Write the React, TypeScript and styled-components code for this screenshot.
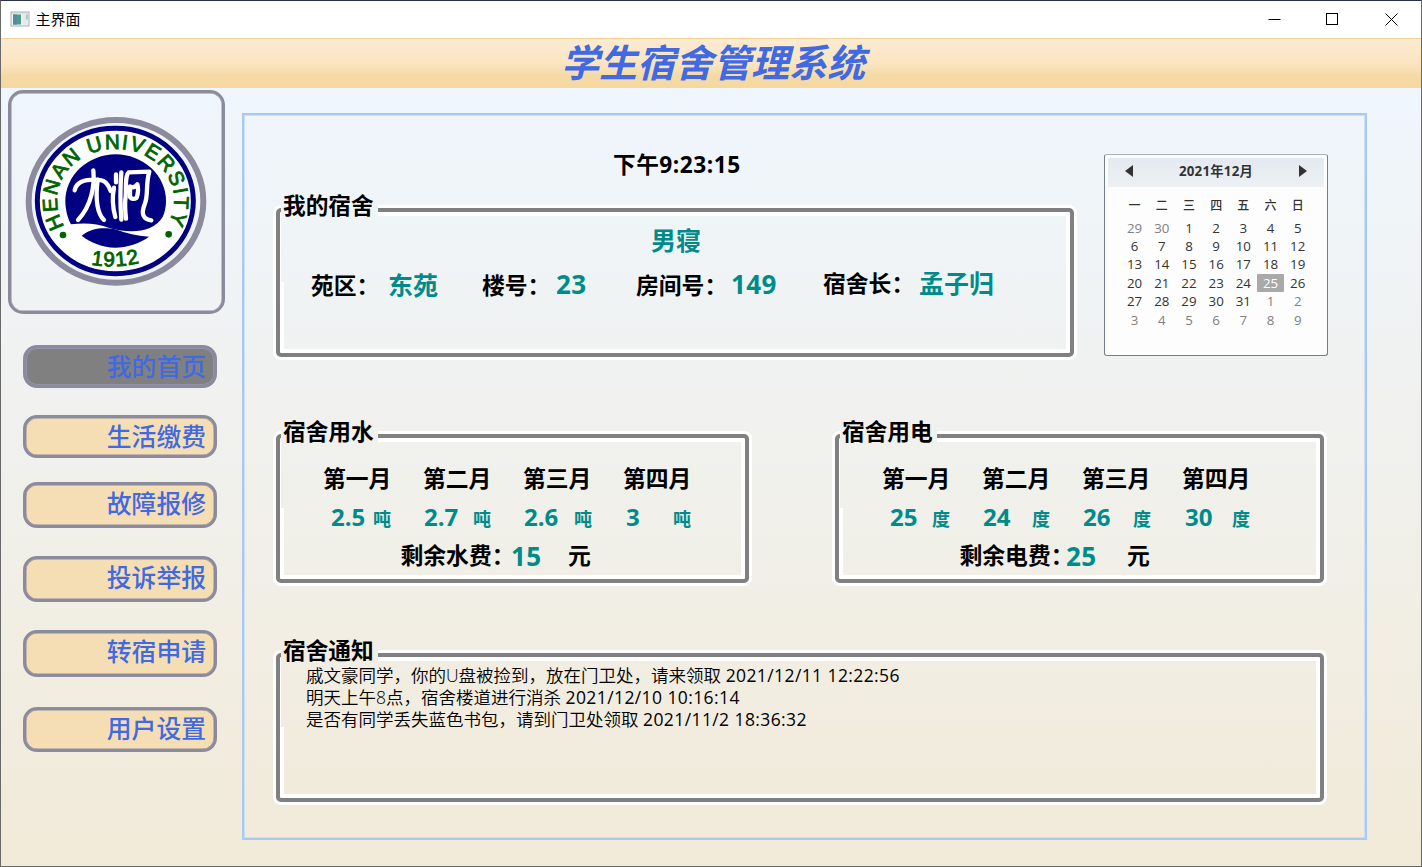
import React from "react";
import styled, { createGlobalStyle } from "styled-components";

const GlobalStyle = createGlobalStyle`
  *, *::before, *::after { box-sizing: border-box; }
  body {
    margin: 0;
    overflow: hidden;
    font-family: "Open Sans", "Noto Sans CJK SC", sans-serif;
    color: #000;
  }
`;

const Window = styled.div`
  width: 1422px;
  height: 867px;
  display: flex;
  flex-direction: column;
  border: 1px solid #696969;
  border-top-color: #2b3046;
  background: #fff;
`;

const TitleBar = styled.header`
  height: 37px;
  display: flex;
  align-items: center;
  padding: 0 0.5px 1px 8.5px;
  font-size: 15px;
  flex: none;
`;

const WindowName = styled.span`
  flex: 1;
  margin: -1px 0 0 6px;
  line-height: 20px;
`;

const Caption = styled.button`
  width: 58.5px;
  height: 35px;
  padding: 0;
  border: 0;
  background: none;
  display: grid;
  place-items: center;
`;

const Banner = styled.div`
  height: 50px;
  flex: none;
  border-top: 1px solid #f3d193;
  background: linear-gradient(#faebd3 0%, #fbe5c0 50%, #f5daa6 75%, #f5d89f 100%);
  text-align: center;
  padding-left: 4px;
`;

const BannerTitle = styled.h1`
  margin: 0;
  font-size: 38px;
  line-height: 47px;
  font-weight: 700;
  font-style: italic;
  color: #4169e1;
`;

const Body = styled.div`
  flex: 1;
  display: flex;
  background: linear-gradient(#eff6fd, #f0f2f1 36%, #f2ead8);
`;

const Sidebar = styled.nav`
  width: 241px;
  padding: 2px 0 0 7px;
  flex: none;
`;

const LogoCard = styled.div`
  width: 217px;
  height: 224px;
  border: 3.5px solid #8c8b9e;
  border-radius: 15px;
  padding: 23px 0 0 14px;
  margin-bottom: 31px;
  box-shadow: inset 0 0 0 0.5px #8c8b9e;
`;

const NavButton = styled.button<{ $h: number; $gap: number; $active?: boolean }>`
  display: flex;
  justify-content: flex-end;
  align-items: flex-start;
  width: 194px;
  height: ${(p) => p.$h}px;
  margin: 0 0 ${(p) => p.$gap}px 15px;
  padding: 2px 8px 0 0;
  border: 3px solid #8c8b9e;
  border-radius: 14px;
  background: ${(p) => (p.$active ? "#808080" : "#f5deb3")};
  box-shadow: ${(p) => (p.$active ? "inset 0 0 0 1px #9292a8" : "inset 0 0 0 0.5px #8c8b9e")};
  color: #4169e1;
  font: 500 24.8px/30px "Noto Sans CJK SC", sans-serif;
`;

const Panel = styled.main`
  width: 1125px;
  height: 727px;
  margin-top: 25px;
  padding-left: 32px;
  border: 2px solid #a8c9f1;
  box-shadow: inset 0 0 0 1px #cbdff5;
`;

const Row = styled.div<{ $gap?: number }>`
  display: flex;
  gap: ${(p) => p.$gap ?? 0}px;
`;

const Clock = styled.div`
  height: 93px;
  padding: 35px 0 0 337px;
  font-size: 22.7px;
  line-height: 30px;
  font-weight: 700;
  letter-spacing: 0.5px;
`;

const GroupBox = styled.section<{ $w: number; $mt?: number }>`
  position: relative;
  width: ${(p) => p.$w}px;
  height: 149px;
  margin-top: ${(p) => p.$mt ?? 0}px;
`;

/* Etched border, opened behind the legend. */
const Frame = styled.div`
  position: absolute;
  inset: 0;
  border: 4px solid #808080;
  border-radius: 5px;
  box-shadow: 0 0 0 3px #fff, inset 0 0 0 4px #fff;
  clip-path: polygon(
    -4px -4px, 5px -4px, 5px 74px, 10px 74px, 10px 130px, calc(100% - 12px) 130px,
    calc(100% - 12px) 12px, 102px 12px, 102px -4px, calc(100% + 4px) -4px,
    calc(100% + 4px) calc(100% + 4px), -4px calc(100% + 4px)
  );
`;

const Legend = styled.h2`
  position: relative;
  margin: 0;
  top: -17px;
  padding-left: 7px;
  height: 30px;
  font-size: 22.7px;
  line-height: 30px;
  font-weight: 700;
`;

const Label = styled.span<{ $raise?: number }>`
  font-size: 22.8px;
  line-height: 30px;
  font-weight: 700;
  white-space: nowrap;
  margin-top: ${(p) => -(p.$raise ?? 0)}px;
`;

const FeeLabel = styled(Label)`
  font-feature-settings: "halt";
`;

const Value = styled(Label)<{ $size?: number }>`
  color: #008b8b;
  font-size: ${(p) => p.$size ?? 25}px;
`;

const Figure = styled(Value)`
  letter-spacing: 0.35px;
`;

const DormType = styled.div`
  margin-top: -14px;
  padding-left: 375px;
  display: flex;
`;

const InfoGrid = styled.div`
  display: grid;
  grid-template-columns: 77px 94px 74px 80px 95px 92px 96px auto;
  padding-left: 35px;
  margin-top: 16px;
`;

const MonthGrid = styled.div`
  display: grid;
  grid-template-columns: repeat(4, 100px);
  padding-left: 47px;
`;

const ReadingGrid = styled.div`
  display: grid;
  grid-template-columns: 42px 51px 49px 51px 50px 52px 47px auto;
  padding-left: 55px;
  margin-top: 8px;
`;

const Balance = styled.div<{ $valueAt: number }>`
  display: grid;
  grid-template-columns: ${(p) => p.$valueAt}px ${(p) => 167.5 - p.$valueAt}px auto;
  padding-left: 124.5px;
  margin-top: 7px;
`;

const Notices = styled.ul`
  list-style: none;
  margin: -19px 0 0;
  padding: 0 0 0 30px;
  font-size: 17.5px;
  line-height: 22px;
  font-weight: 350;
`;

const Stamp = styled.time`
  font-weight: 400;
  letter-spacing: 0.4px;
`;

const CalendarBox = styled.aside`
  width: 224px;
  height: 202px;
  margin-top: 39px;
  padding: 3px;
  border: 1px solid #737f8c;
  border-top-color: #a9b2bd;
  border-radius: 3px;
  background: #fdfdfe;
  color: #333;
`;

const CalendarHead = styled.div`
  height: 29px;
  display: flex;
  align-items: center;
  justify-content: space-between;
  padding: 0 17px 3px 17px;
  background: linear-gradient(#e4e9f1, #edf1f4);
  font-size: 13.3px;
  line-height: 16px;
  font-weight: 700;
`;

const CalendarTitle = styled.span`
  letter-spacing: 0.25px;
`;

const Week = styled.div<{ $head?: boolean }>`
  display: grid;
  grid-template-columns: repeat(7, 27.2px);
  padding-left: 13px;
  height: ${(p) => (p.$head ? "31.5px" : "18.45px")};
  padding-top: ${(p) => (p.$head ? "9.6px" : "0")};
`;

const Day = styled.span<{ $muted?: boolean; $selected?: boolean }>`
  height: 18.45px;
  line-height: 18px;
  font-size: 13.3px;
  text-align: center;
  border-radius: 1px;
  color: ${(p) => (p.$selected ? "#fff" : p.$muted ? "#808080" : "#333")};
  background: ${(p) => (p.$selected ? "#a9a9a9" : "transparent")};
`;

const WeekName = styled(Day)`
  font-size: 12px;
  font-weight: 500;
`;

const UsageColumn = styled.div`
  padding-top: 77px;
`;

const AppIcon = () => (
  <svg width="20" height="16" viewBox="0 0 20 16">
    <rect x="1" y="1" width="18" height="14" fill="#f1f3f4" stroke="#a9afb5" />
    <path d="M1.5 2h17" stroke="#c5cbd0" />
    <rect x="3" y="3.5" width="8" height="10" fill="#4e9b8a" />
    <path d="M3 3.5h4v10H3z" fill="#4f8f9d" />
    <rect x="12.5" y="3.5" width="5" height="10" fill="#e6e9eb" />
    <path d="M17 3.5v5" stroke="#76a58a" />
  </svg>
);

const UniversitySeal = () => (
  <svg width="182" height="171" viewBox="75 93 546 513">
    <defs>
      <path id="ring" d="M194 424 A172 155 0 0 1 347 192 A172 155 0 0 1 500 424" />
      <path id="year" d="M242 532 Q347 560 452 524" />
    </defs>
    <ellipse cx="348" cy="349" rx="262" ry="244" fill="none" stroke="#8c8b9e" strokeWidth="18" />
    <ellipse cx="346" cy="348" rx="234" ry="218" fill="#fff" stroke="#000080" strokeWidth="15" />
    <path
      d="M213 418 C203 400 196 372 196 348 A151 140 0 0 1 498 348 C498 365 495 382 488 396 C460 442 395 447 330 430 C290 414 250 414 213 418Z"
      fill="#000080"
    />
    <path
      d="M245 452 C280 425 320 428 350 434 C380 445 410 452 447 455 C420 475 380 488 345 488 C310 488 270 472 245 452Z"
      fill="#000080"
    />
    <g fill="none" stroke="#fff" strokeWidth="13" strokeLinecap="round" strokeLinejoin="round">
      <path d="M224 316 C230 290 252 284 286 284 C312 284 322 292 332 318" />
      <path d="M280 256 C284 300 276 360 234 405" />
      <path d="M293 284 C286 340 292 385 312 405" />
      <path d="M348 268v24M342 308c-5 25-4 60 4 88M364 262c-3 40-4 90 0 142M382 268c-8 20-2 50-6 75c-2 20 0 40 2 58" />
      <path d="M386 262 L448 260 C436 300 446 330 434 358 C422 388 430 402 454 406" />
      <path d="M390 304q12 8 22-6c4 14 2 28-2 40c-8 6-16 4-20-2z" />
    </g>
    <g
      fill="#006400"
      fontFamily="Liberation Sans, sans-serif"
      fontSize="62"
      stroke="#006400"
      strokeWidth="2.6"
    >
      <text letterSpacing="4.4">
        <textPath href="#ring">HENAN UNIVERSITY</textPath>
      </text>
      <text letterSpacing="3">
        <textPath href="#year" startOffset="50%" textAnchor="middle">1912</textPath>
      </text>
    </g>
    <circle cx="189" cy="450" r="10" fill="#006400" />
    <circle cx="506" cy="448" r="10" fill="#006400" />
  </svg>
);

const navItems = [
  { text: "我的首页", h: 43, gap: 27, active: true },
  { text: "生活缴费", h: 43, gap: 24 },
  { text: "故障报修", h: 46, gap: 28 },
  { text: "投诉举报", h: 46, gap: 28 },
  { text: "转宿申请", h: 47, gap: 30 },
  { text: "用户设置", h: 45, gap: 0 },
];

const months = ["第一月", "第二月", "第三月", "第四月"];

const notices = [
  { text: "戚文豪同学，你的U盘被捡到，放在门卫处，请来领取", time: "2021/12/11 12:22:56" },
  { text: "明天上午8点，宿舍楼道进行消杀", time: "2021/12/10 10:16:14" },
  { text: "是否有同学丢失蓝色书包，请到门卫处领取", time: "2021/11/2 18:36:32" },
];

const weeks = Array.from({ length: 6 }, (_, w) =>
  Array.from({ length: 7 }, (_, d) => {
    const n = w * 7 + d - 1;
    if (n < 1) return { day: n + 30, muted: true };
    if (n > 31) return { day: n - 31, muted: true };
    return { day: n, muted: false };
  })
);

interface UsageProps {
  title: string;
  width: number;
  readings: string[];
  unit: string;
  balanceLabel: string;
  balance: string;
  balanceAt: number;
}

const Usage = (p: UsageProps) => (
  <GroupBox $w={p.width}>
    <Frame />
    <Legend>{p.title}</Legend>
    <MonthGrid>
      {months.map((m) => (
        <Label key={m}>{m}</Label>
      ))}
    </MonthGrid>
    <ReadingGrid>
      {p.readings.map((r, i) => (
        <React.Fragment key={i}>
          <Value $size={24}>{r}</Value>
          <Value $size={18} $raise={-2}>{p.unit}</Value>
        </React.Fragment>
      ))}
    </ReadingGrid>
    <Balance $valueAt={p.balanceAt}>
      <FeeLabel>{p.balanceLabel}</FeeLabel>
      <Figure $size={26}>{p.balance}</Figure>
      <Label>元</Label>
    </Balance>
  </GroupBox>
);

export default function App() {
  return (
    <Window>
      <GlobalStyle />
      <TitleBar>
        <AppIcon />
        <WindowName>主界面</WindowName>
        <Caption aria-label="minimize">
          <svg width="13" height="13"><path d="M0.5 6.5h12" stroke="#000" /></svg>
        </Caption>
        <Caption aria-label="maximize">
          <svg width="13" height="13"><rect x="0.5" y="0.5" width="11" height="11" fill="none" stroke="#000" /></svg>
        </Caption>
        <Caption aria-label="close">
          <svg width="13" height="13"><path d="M0.5 0.5l12 12M12.5 0.5l-12 12" stroke="#000" /></svg>
        </Caption>
      </TitleBar>
      <Banner>
        <BannerTitle>学生宿舍管理系统</BannerTitle>
      </Banner>
      <Body>
        <Sidebar>
          <LogoCard>
            <UniversitySeal />
          </LogoCard>
          {navItems.map((n) => (
            <NavButton key={n.text} $h={n.h} $gap={n.gap} $active={n.active}>
              {n.text}
            </NavButton>
          ))}
        </Sidebar>
        <Panel>
          <Row $gap={30}>
            <div>
              <Clock>下午9:23:15</Clock>
              <GroupBox $w={798}>
                <Frame />
                <Legend>我的宿舍</Legend>
                <DormType>
                  <Value $raise={-1}>男寝</Value>
                </DormType>
                <InfoGrid>
                  <Label>苑区：</Label>
                  <Value $raise={1}>东苑</Value>
                  <Label>楼号：</Label>
                  <Figure $raise={2} $size={26}>23</Figure>
                  <Label>房间号：</Label>
                  <Figure $raise={2} $size={26}>149</Figure>
                  <Label $raise={2}>宿舍长：</Label>
                  <Value $raise={3}>孟子归</Value>
                </InfoGrid>
              </GroupBox>
            </div>
            <CalendarBox>
              <CalendarHead>
                <svg width="8" height="12"><path d="M8 0v12L0 6z" fill="#333" /></svg>
                <CalendarTitle>2021年12月</CalendarTitle>
                <svg width="8" height="12"><path d="M0 0v12L8 6z" fill="#333" /></svg>
              </CalendarHead>
              <Week $head>
                {"一二三四五六日".split("").map((d) => (
                  <WeekName key={d}>{d}</WeekName>
                ))}
              </Week>
              {weeks.map((week, i) => (
                <Week key={i}>
                  {week.map((d) => (
                    <Day key={d.day} $muted={d.muted} $selected={d.day === 25 && !d.muted}>
                      {d.day}
                    </Day>
                  ))}
                </Week>
              ))}
            </CalendarBox>
          </Row>
          <Row $gap={86}>
            <UsageColumn>
              <Usage
                title="宿舍用水"
                width={473}
                readings={["2.5", "2.7", "2.6", "3"]}
                unit="吨"
                balanceLabel="剩余水费："
                balance="15"
                balanceAt={110.5}
              />
            </UsageColumn>
            <UsageColumn>
              <Usage
                title="宿舍用电"
                width={489}
                readings={["25", "24", "26", "30"]}
                unit="度"
                balanceLabel="剩余电费："
                balance="25"
                balanceAt={106.5}
              />
            </UsageColumn>
          </Row>
          <GroupBox $w={1048} $mt={70}>
            <Frame />
            <Legend>宿舍通知</Legend>
            <Notices>
              {notices.map((n) => (
                <li key={n.time}>
                  {n.text} <Stamp>{n.time}</Stamp>
                </li>
              ))}
            </Notices>
          </GroupBox>
        </Panel>
      </Body>
    </Window>
  );
}
